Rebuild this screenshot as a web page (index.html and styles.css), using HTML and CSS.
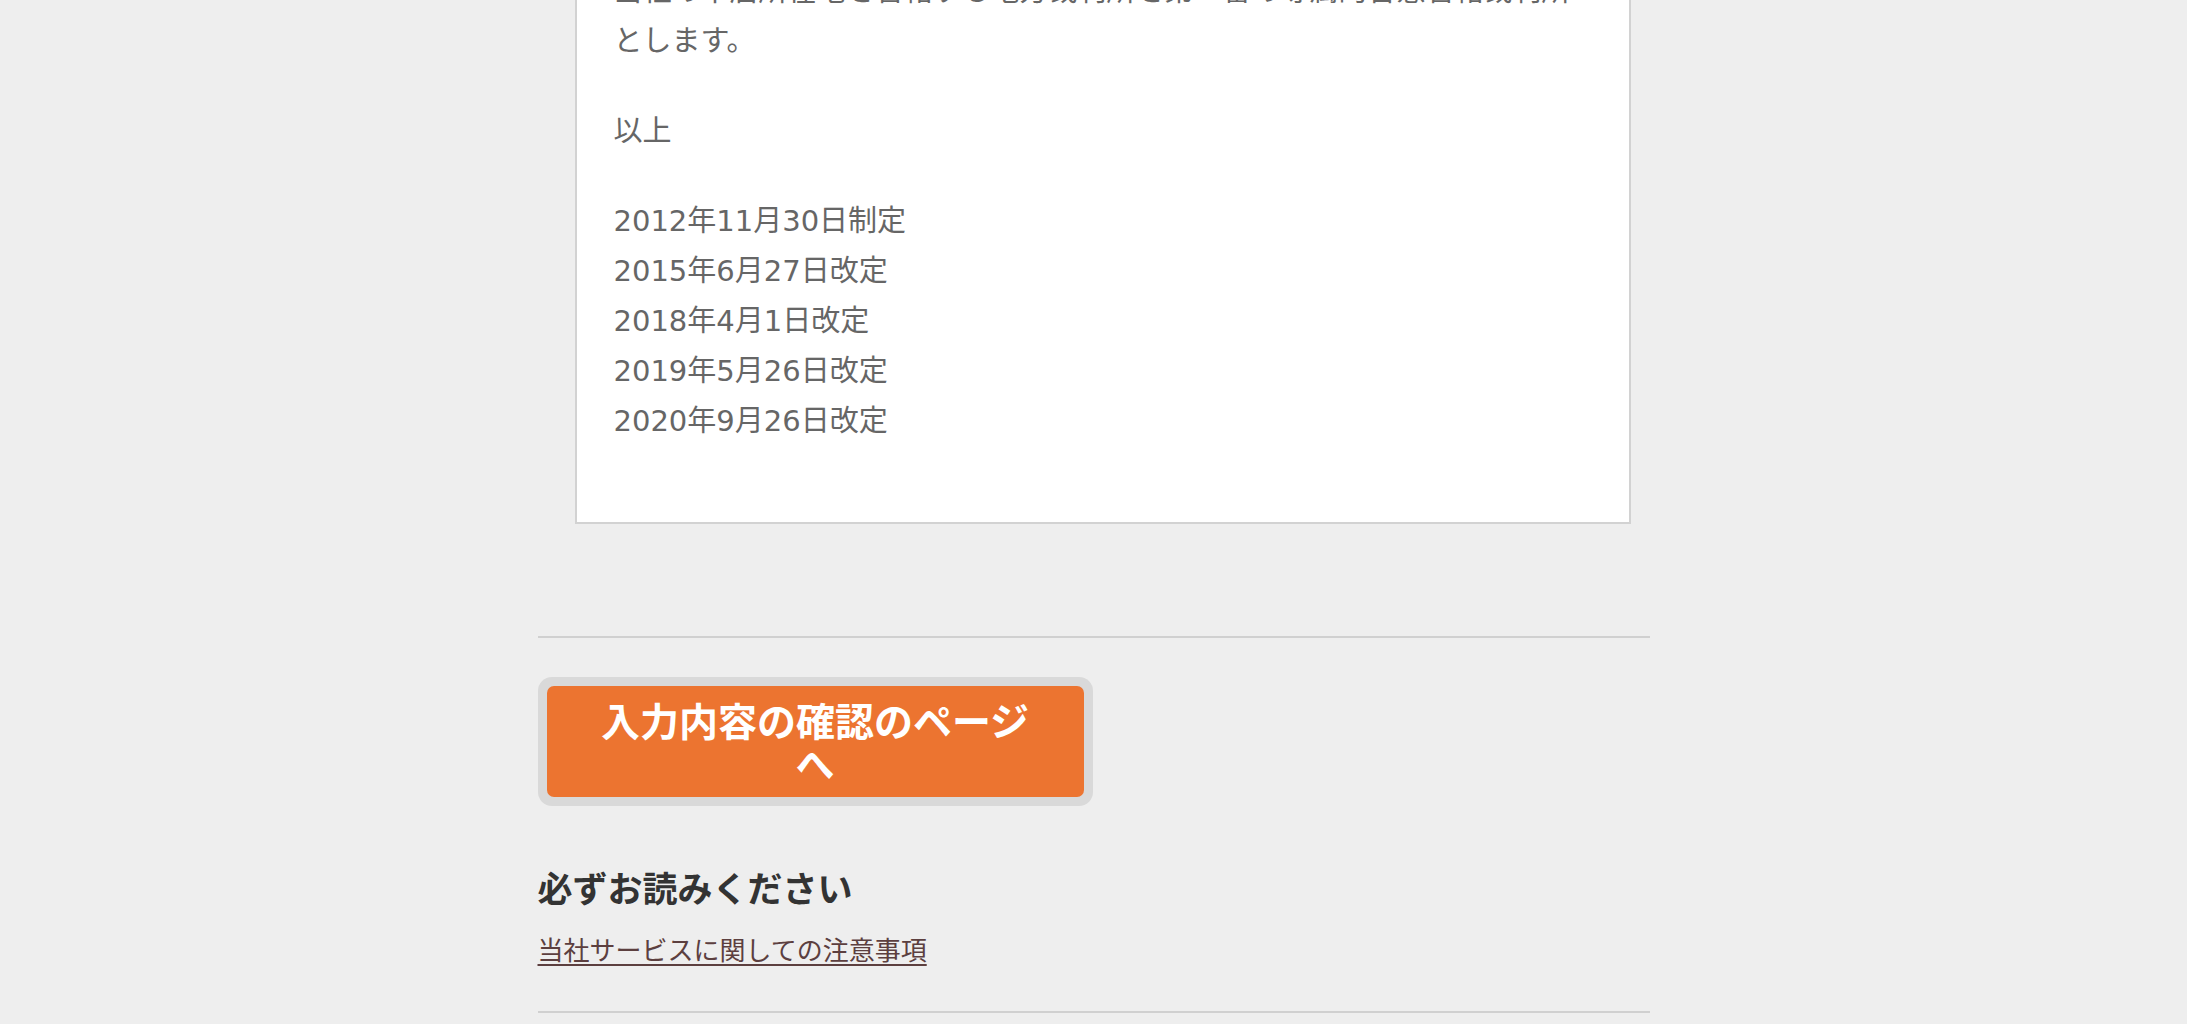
FILE: index.html
```html
<!DOCTYPE html>
<html lang="ja">
<head>
<meta charset="utf-8">
<title>利用規約</title>
<link rel="stylesheet" href="styles.css">
</head>
<body>
<div class="page">
  <div class="terms">
    <p class="para"><span class="nowrap">当社の本店所在地を管轄する地方裁判所を第一審の専属的合意管轄裁判所</span><br>とします。</p>
    <p class="para">以上</p>
    <p class="para">2012年11月30日制定<br>2015年6月27日改定<br>2018年4月1日改定<br>2019年5月26日改定<br>2020年9月26日改定</p>
  </div>
  <hr class="rule rule-top">
  <div class="btn-wrap">
    <button class="btn" type="button">入力内容の確認のページへ</button>
  </div>
  <h2 class="notice-title">必ずお読みください</h2>
  <a class="notice-link" href="#">当社サービスに関しての注意事項</a>
  <hr class="rule rule-bottom">
</div>
</body>
</html>
```
FILE: styles.css
```css
html, body {
  margin: 0;
  padding: 0;
  background: #eeeeee;
}
body {
  font-family: "DejaVu Sans", "Noto Sans CJK JP", sans-serif;
  color: #666666;
}
.page {
  width: 1112px;
  margin: 0 auto;
  display: flex;
  flex-direction: column;
  align-items: flex-start;
}
.terms {
  align-self: stretch;
  margin: -76px 19px 0 37px;
  background: #ffffff;
  border: 2px solid #d2d2d2;
  padding: 40px 40px 76px 37px;
  font-size: 29px;
  line-height: 50px;
}
.nowrap {
  white-space: nowrap;
}
.para {
  margin: 0 0 40px 0;
}
.para:last-child {
  margin-bottom: 0;
}
.rule {
  align-self: stretch;
  border: 0;
  height: 2px;
  background: #d0d0d0;
  margin: 0;
}
.rule-top {
  margin-top: 112px;
}
.btn-wrap {
  margin-top: 39px;
  background: #d9d9d9;
  border-radius: 14px;
  padding: 9px;
  width: 537px;
}
.btn {
  display: block;
  width: 100%;
  border: 0;
  border-radius: 7px;
  background: #ec7430;
  color: #ffffff;
  font-family: "Noto Sans CJK JP", sans-serif;
  font-weight: 700;
  font-size: 39px;
  line-height: 43px;
  padding: 12px 50px 13px;
  text-align: center;
  cursor: pointer;
}
.notice-title {
  margin: 57px 0 0 0;
  font-family: "Noto Sans CJK JP", sans-serif;
  font-size: 35px;
  line-height: 48px;
  font-weight: 700;
  color: #333333;
}
.notice-link {
  margin-top: 18px;
  font-family: "Noto Sans CJK JP", sans-serif;
  font-size: 26px;
  line-height: 39px;
  color: #5c3f3f;
  text-decoration: underline;
  text-decoration-thickness: 2px;
  text-underline-offset: 4px;
}
.rule-bottom {
  margin-top: 43px;
}
```
